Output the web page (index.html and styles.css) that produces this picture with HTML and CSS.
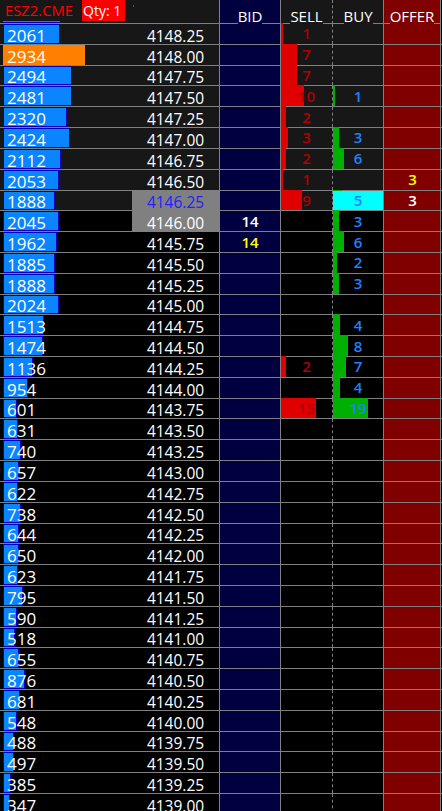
FILE: index.html
```html
<!DOCTYPE html>
<html>
<head>
<meta charset="utf-8">
<link rel="stylesheet" href="styles.css">
</head>
<body>
<div class="ladder">
  <div class="head">
    <div class="sym">
      <div class="symtop"><span class="symname">ESZ2.CME</span><span class="qty">Qty: 1</span><span class="dot"></span></div>
      <div class="peek"><i></i></div>
    </div>
    <div class="hc h-bid"><span>BID</span></div>
    <div class="hc h-sell"><span>SELL</span></div>
    <div class="hc h-buy"><span>BUY</span></div>
    <div class="hc h-offer"><span>OFFER</span></div>
    <div class="edge"></div>
  </div>

  <div class="row a"><div class="vol"><i class="bar" style="width:57px"></i><span>2061</span></div><div class="px">4148.25</div><div class="bid"></div><div class="sell"><i class="sb" style="width:2px"></i><span>1</span></div><div class="buy"></div><div class="offer"></div><div class="edge"></div></div>
  <div class="row a"><div class="vol"><i class="bar hot" style="width:82px"></i><span>2934</span></div><div class="px">4148.00</div><div class="bid"></div><div class="sell"><i class="sb" style="width:16px"></i><span>7</span></div><div class="buy"></div><div class="offer"></div><div class="edge"></div></div>
  <div class="row a"><div class="vol"><i class="bar" style="width:69px"></i><span>2494</span></div><div class="px">4147.75</div><div class="bid"></div><div class="sell"><i class="sb" style="width:16px"></i><span>7</span></div><div class="buy"></div><div class="offer"></div><div class="edge"></div></div>
  <div class="row a"><div class="vol"><i class="bar" style="width:69px"></i><span>2481</span></div><div class="px">4147.50</div><div class="bid"></div><div class="sell"><i class="sb" style="width:23px"></i><span>10</span></div><div class="buy"><i class="bb" style="width:2px"></i><span>1</span></div><div class="offer"></div><div class="edge"></div></div>
  <div class="row a"><div class="vol"><i class="bar" style="width:64px"></i><span>2320</span></div><div class="px">4147.25</div><div class="bid"></div><div class="sell"><i class="sb" style="width:5px"></i><span>2</span></div><div class="buy"></div><div class="offer"></div><div class="edge"></div></div>
  <div class="row a"><div class="vol"><i class="bar" style="width:67px"></i><span>2424</span></div><div class="px">4147.00</div><div class="bid"></div><div class="sell"><i class="sb" style="width:7px"></i><span>3</span></div><div class="buy"><i class="bb" style="width:6px"></i><span>3</span></div><div class="offer"></div><div class="edge"></div></div>
  <div class="row a"><div class="vol"><i class="bar" style="width:58px"></i><span>2112</span></div><div class="px">4146.75</div><div class="bid"></div><div class="sell"><i class="sb" style="width:5px"></i><span>2</span></div><div class="buy"><i class="bb" style="width:11px"></i><span>6</span></div><div class="offer"></div><div class="edge"></div></div>
  <div class="row a"><div class="vol"><i class="bar" style="width:56px"></i><span>2053</span></div><div class="px">4146.50</div><div class="bid"></div><div class="sell"><i class="sb" style="width:2px"></i><span>1</span></div><div class="buy"></div><div class="offer"><span class="y">3</span></div><div class="edge"></div></div>
  <div class="row a"><div class="vol"><i class="bar" style="width:52px"></i><span>1888</span></div><div class="px hl blue">4146.25</div><div class="bid"></div><div class="sell"><i class="sb" style="width:21px"></i><span>9</span></div><div class="buy cy"><i class="bb" style="width:9px"></i><span>5</span></div><div class="offer"><span>3</span></div><div class="edge"></div></div>
  <div class="row"><div class="vol"><i class="bar" style="width:56px"></i><span>2045</span></div><div class="px hl">4146.00</div><div class="bid"><span>14</span></div><div class="sell"></div><div class="buy"><i class="bb" style="width:6px"></i><span>3</span></div><div class="offer"></div><div class="edge"></div></div>
  <div class="row"><div class="vol"><i class="bar" style="width:54px"></i><span>1962</span></div><div class="px">4145.75</div><div class="bid"><span class="y">14</span></div><div class="sell"></div><div class="buy"><i class="bb" style="width:11px"></i><span>6</span></div><div class="offer"></div><div class="edge"></div></div>
  <div class="row"><div class="vol"><i class="bar" style="width:52px"></i><span>1885</span></div><div class="px">4145.50</div><div class="bid"></div><div class="sell"></div><div class="buy"><i class="bb" style="width:4px"></i><span>2</span></div><div class="offer"></div><div class="edge"></div></div>
  <div class="row"><div class="vol"><i class="bar" style="width:52px"></i><span>1888</span></div><div class="px">4145.25</div><div class="bid"></div><div class="sell"></div><div class="buy"><i class="bb" style="width:6px"></i><span>3</span></div><div class="offer"></div><div class="edge"></div></div>
  <div class="row"><div class="vol"><i class="bar" style="width:56px"></i><span>2024</span></div><div class="px">4145.00</div><div class="bid"></div><div class="sell"></div><div class="buy"></div><div class="offer"></div><div class="edge"></div></div>
  <div class="row"><div class="vol"><i class="bar" style="width:41px"></i><span>1513</span></div><div class="px">4144.75</div><div class="bid"></div><div class="sell"></div><div class="buy"><i class="bb" style="width:7px"></i><span>4</span></div><div class="offer"></div><div class="edge"></div></div>
  <div class="row"><div class="vol"><i class="bar" style="width:40px"></i><span>1474</span></div><div class="px">4144.50</div><div class="bid"></div><div class="sell"></div><div class="buy"><i class="bb" style="width:15px"></i><span>8</span></div><div class="offer"></div><div class="edge"></div></div>
  <div class="row"><div class="vol"><i class="bar" style="width:30px"></i><span>1136</span></div><div class="px">4144.25</div><div class="bid"></div><div class="sell"><i class="sb" style="width:5px"></i><span>2</span></div><div class="buy"><i class="bb" style="width:13px"></i><span>7</span></div><div class="offer"></div><div class="edge"></div></div>
  <div class="row"><div class="vol"><i class="bar" style="width:25px"></i><span>954</span></div><div class="px">4144.00</div><div class="bid"></div><div class="sell"></div><div class="buy"><i class="bb" style="width:7px"></i><span>4</span></div><div class="offer"></div><div class="edge"></div></div>
  <div class="row"><div class="vol"><i class="bar" style="width:14px"></i><span>601</span></div><div class="px">4143.75</div><div class="bid"></div><div class="sell"><i class="sb" style="width:35px"></i><span>15</span></div><div class="buy"><i class="bb" style="width:35px"></i><span>19</span></div><div class="offer"></div><div class="edge"></div></div>
  <div class="row"><div class="vol"><i class="bar" style="width:15px"></i><span>631</span></div><div class="px">4143.50</div><div class="bid"></div><div class="sell"></div><div class="buy"></div><div class="offer"></div><div class="edge"></div></div>
  <div class="row"><div class="vol"><i class="bar" style="width:18px"></i><span>740</span></div><div class="px">4143.25</div><div class="bid"></div><div class="sell"></div><div class="buy"></div><div class="offer"></div><div class="edge"></div></div>
  <div class="row"><div class="vol"><i class="bar" style="width:16px"></i><span>657</span></div><div class="px">4143.00</div><div class="bid"></div><div class="sell"></div><div class="buy"></div><div class="offer"></div><div class="edge"></div></div>
  <div class="row"><div class="vol"><i class="bar" style="width:15px"></i><span>622</span></div><div class="px">4142.75</div><div class="bid"></div><div class="sell"></div><div class="buy"></div><div class="offer"></div><div class="edge"></div></div>
  <div class="row"><div class="vol"><i class="bar" style="width:18px"></i><span>738</span></div><div class="px">4142.50</div><div class="bid"></div><div class="sell"></div><div class="buy"></div><div class="offer"></div><div class="edge"></div></div>
  <div class="row"><div class="vol"><i class="bar" style="width:16px"></i><span>644</span></div><div class="px">4142.25</div><div class="bid"></div><div class="sell"></div><div class="buy"></div><div class="offer"></div><div class="edge"></div></div>
  <div class="row"><div class="vol"><i class="bar" style="width:16px"></i><span>650</span></div><div class="px">4142.00</div><div class="bid"></div><div class="sell"></div><div class="buy"></div><div class="offer"></div><div class="edge"></div></div>
  <div class="row"><div class="vol"><i class="bar" style="width:15px"></i><span>623</span></div><div class="px">4141.75</div><div class="bid"></div><div class="sell"></div><div class="buy"></div><div class="offer"></div><div class="edge"></div></div>
  <div class="row"><div class="vol"><i class="bar" style="width:20px"></i><span>795</span></div><div class="px">4141.50</div><div class="bid"></div><div class="sell"></div><div class="buy"></div><div class="offer"></div><div class="edge"></div></div>
  <div class="row"><div class="vol"><i class="bar" style="width:14px"></i><span>590</span></div><div class="px">4141.25</div><div class="bid"></div><div class="sell"></div><div class="buy"></div><div class="offer"></div><div class="edge"></div></div>
  <div class="row"><div class="vol"><i class="bar" style="width:12px"></i><span>518</span></div><div class="px">4141.00</div><div class="bid"></div><div class="sell"></div><div class="buy"></div><div class="offer"></div><div class="edge"></div></div>
  <div class="row"><div class="vol"><i class="bar" style="width:16px"></i><span>655</span></div><div class="px">4140.75</div><div class="bid"></div><div class="sell"></div><div class="buy"></div><div class="offer"></div><div class="edge"></div></div>
  <div class="row"><div class="vol"><i class="bar" style="width:22px"></i><span>876</span></div><div class="px">4140.50</div><div class="bid"></div><div class="sell"></div><div class="buy"></div><div class="offer"></div><div class="edge"></div></div>
  <div class="row"><div class="vol"><i class="bar" style="width:17px"></i><span>681</span></div><div class="px">4140.25</div><div class="bid"></div><div class="sell"></div><div class="buy"></div><div class="offer"></div><div class="edge"></div></div>
  <div class="row"><div class="vol"><i class="bar" style="width:14px"></i><span>548</span></div><div class="px">4140.00</div><div class="bid"></div><div class="sell"></div><div class="buy"></div><div class="offer"></div><div class="edge"></div></div>
  <div class="row"><div class="vol"><i class="bar" style="width:11px"></i><span>488</span></div><div class="px">4139.75</div><div class="bid"></div><div class="sell"></div><div class="buy"></div><div class="offer"></div><div class="edge"></div></div>
  <div class="row"><div class="vol"><i class="bar" style="width:11px"></i><span>497</span></div><div class="px">4139.50</div><div class="bid"></div><div class="sell"></div><div class="buy"></div><div class="offer"></div><div class="edge"></div></div>
  <div class="row"><div class="vol"><i class="bar" style="width:8px"></i><span>385</span></div><div class="px">4139.25</div><div class="bid"></div><div class="sell"></div><div class="buy"></div><div class="offer"></div><div class="edge"></div></div>
  <div class="row"><div class="vol"><i class="bar" style="width:7px"></i><span>347</span></div><div class="px">4139.00</div><div class="bid"></div><div class="sell"></div><div class="buy"></div><div class="offer"></div><div class="edge"></div></div>
</div>
</body>
</html>
```
FILE: styles.css
```css
* { box-sizing: border-box; }
html, body { margin: 0; padding: 0; background: #000; }
body {
  width: 442px;
  height: 811px;
  overflow: hidden;
  font-family: "Open Sans", "Noto Sans", sans-serif;
  color: #fff;
}
.ladder { width: 442px; }

.head, .row {
  display: grid;
  grid-template-columns: 132px 88px 61px 52px 51px 57px 1px;
}
.head { height: 24px; }
.row { height: 20.82px; border-bottom: 1px solid #808080; }

/* header */
.sym {
  grid-column: 1 / 3;
  display: flex;
  flex-direction: column;
  background: #171717;
  border-right: 1px solid #808080;
  border-bottom: 1px solid #808080;
}
.symtop { height: 21px; display: flex; align-items: center; padding-left: 5px; }
.symname { width: 77px; color: #ff0000; font-size: 14.8px; line-height: 21px; white-space: nowrap; }
.qty {
  width: 43px;
  height: 21px;
  padding-left: 1px;
  background: #ff0000;
  color: #fff;
  font-size: 14px;
  line-height: 21px;
  white-space: nowrap;
}
.dot { width: 1px; height: 2px; background: #ff0000; margin-left: 8px; align-self: flex-start; margin-top: 5px; }
.peek { height: 2px; display: flex; }
.peek i { margin-left: 3px; width: 57px; background: #0a84ff; border-bottom: 1px solid #0000c0; }

.hc {
  display: flex;
  align-items: flex-end;
  border-right: 1px solid #808080;
}
.hc::before, .hc::after { content: ""; flex: 1; border-bottom: 1px solid #808080; }
.hc span { color: #fff; font-size: 15px; font-weight: 400; line-height: 15px; white-space: nowrap; }
.h-bid { background: #000040; }
.h-sell { background: #171717; border-right: 1px dashed #808080; }
.h-buy { background: #171717; }
.h-offer { background: #800000; }
.edge { background: #000; }

/* volume column */
.vol { display: grid; min-width: 0; }
.vol > *, .sell > *, .buy > * { grid-area: 1 / 1; }
.bar {
  justify-self: start;
  align-self: stretch;
  margin-left: 3px;
  background: #0a84ff;
  border: 1px solid #0000c0;
}
.bar.hot { background: #ff8000; border: 0; }
.vol span {
  align-self: end;
  padding-left: 7px;
  font-size: 17px;
  line-height: 17px;
  white-space: nowrap;
}

/* price column */
.px {
  display: flex;
  align-items: flex-end;
  justify-content: center;
  border-right: 1px solid #808080;
  font-size: 15.5px;
  line-height: 16px;
}

.a .vol, .a .px, .a .sell, .a .buy { background: #171717; }
.row .px.hl { background: #808080; }
.row .px.blue { color: #2020ff; }

/* bid / offer */
.bid, .offer {
  display: flex;
  align-items: center;
  justify-content: center;
  border-right: 1px solid #808080;
  font-size: 15px;
  font-weight: 600;
  line-height: 1;
}
.bid { background: #000040; }
.offer { background: #800000; padding-left: 1px; }
.y { color: #ffff00; }

/* sell / buy */
.sell { display: grid; border-right: 1px dashed #808080; }
.buy { display: grid; border-right: 1px solid #808080; }
.sb, .bb { justify-self: start; align-self: stretch; margin-top: -1px; }
.sb { background: #e00000; }
.bb { background: #00b000; }
.sell span, .buy span {
  justify-self: center;
  align-self: center;
  font-size: 15px;
  font-weight: 600;
  line-height: 1;
}
.sell span { color: #b00000; }
.buy span { color: #1e82ff; }
.row .buy.cy { background: #00ffff; }
.buy.cy .bb { align-self: start; height: 1px; }
```
